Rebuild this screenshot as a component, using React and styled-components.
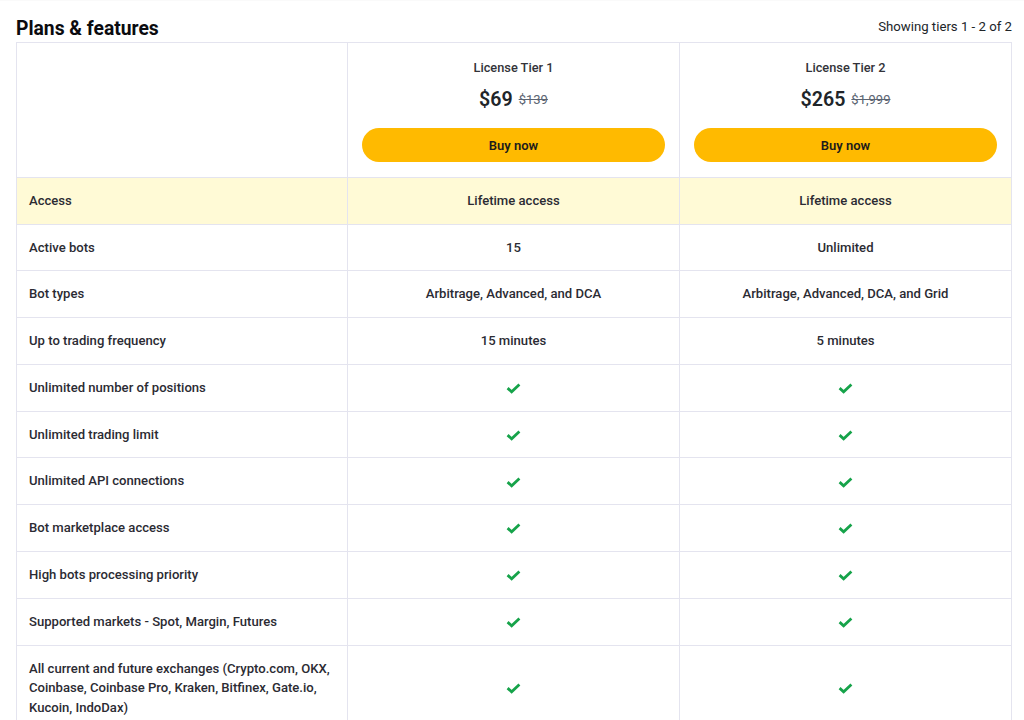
import React from 'react';
import styled, { createGlobalStyle } from 'styled-components';

const Global = createGlobalStyle`
  html, body { margin: 0; padding: 0; background: #fff; overflow: hidden; height: 720px; }
  body { font-family: Roboto, "Liberation Sans", sans-serif; color: #212529; }
`;

const Page = styled.main`
  padding: 16px 12px 0 16px;
  border-top: 1px solid #fafafa;
`;

const Heading = styled.header`
  display: flex;
  justify-content: space-between;
  align-items: flex-end;
  height: 25px;
`;

const Title = styled.h2`
  margin: 0 0 1px;
  font-size: 19.3px;
  line-height: 24px;
  font-weight: 700;
  color: #0b0b0f;
`;

const Showing = styled.span`
  font-size: 13.2px;
  line-height: 20px;
  margin-bottom: 5px;
  color: #212529;
`;

const Table = styled.table`
  width: 996px;
  table-layout: fixed;
  border-collapse: collapse;
  border: 1px solid #e4e4ef;
`;

const Column = styled.col`
  width: ${p => p.$w}px;
`;

const Cell = styled.td`
  border: 1px solid #e4e4ef;
  padding: 13px 12px;
  font-size: 13.1px;
  line-height: 19.77px;
  font-weight: 500;
  color: #2b2b33;
  text-align: ${p => (p.$center ? 'center' : 'left')};
  background: ${p => (p.$hl ? '#fffad6' : 'transparent')};
  vertical-align: middle;
`;

const HeadCell = styled.th`
  border: 1px solid #e4e4ef;
  padding: 15px 14px 14.9px 14px;
  font-weight: 500;
  text-align: center;
  vertical-align: top;
`;

const TierName = styled.div`
  font-size: 12.8px;
  line-height: 20px;
  color: #333339;
`;

const Prices = styled.div`
  display: flex;
  justify-content: center;
  align-items: center;
  gap: 6px;
  margin-top: 7px;
  height: 28px;
`;

const Price = styled.span`
  font-size: 19.6px;
  font-weight: 600;
  color: #212529;
`;

const OldPrice = styled.s`
  font-size: 13px;
  font-weight: 400;
  color: #5b6472;
`;

const Buy = styled.button`
  display: block;
  width: 100%;
  height: 34px;
  margin-top: 15px;
  border: 0;
  border-radius: 17px;
  background: #ffba00;
  color: #1c1c1c;
  font: 600 13px Roboto, sans-serif;
`;

const Check = styled.svg`
  display: block;
  margin: 0 auto;
  width: 15px;
  height: 19.7px;
`;

const Tick = () => (
  <Check viewBox="0 0 15 20" aria-hidden="true">
    <path d="M1.5 10.3 L5.6 14 L13.5 6.6" fill="none" stroke="#16a34a" strokeWidth="2.8" />
  </Check>
);

const textRows = [
  ['Access', 'Lifetime access', 'Lifetime access', true],
  ['Active bots', '15', 'Unlimited'],
  ['Bot types', 'Arbitrage, Advanced, and DCA', 'Arbitrage, Advanced, DCA, and Grid'],
  ['Up to trading frequency', '15 minutes', '5 minutes'],
];

const tickRows = [
  'Unlimited number of positions',
  'Unlimited trading limit',
  'Unlimited API connections',
  'Bot marketplace access',
  'High bots processing priority',
  'Supported markets - Spot, Margin, Futures',
  'All current and future exchanges (Crypto.com, OKX, Coinbase, Coinbase Pro, Kraken, Bitfinex, Gate.io, Kucoin, IndoDax)',
];

const tiers = [
  { name: 'License Tier 1', price: '$69', old: '$139' },
  { name: 'License Tier 2', price: '$265', old: '$1,999' },
];

export default function App() {
  return (
    <Page>
      <Global />
      <Heading>
        <Title>Plans &amp; features</Title>
        <Showing>Showing tiers 1 - 2 of 2</Showing>
      </Heading>
      <Table>
        <colgroup>
          <Column $w={331} />
          <Column $w={332} />
          <Column $w={332} />
        </colgroup>
        <thead>
          <tr>
            <HeadCell />
            {tiers.map(t => (
              <HeadCell key={t.name}>
                <TierName>{t.name}</TierName>
                <Prices>
                  <Price>{t.price}</Price>
                  <OldPrice>{t.old}</OldPrice>
                </Prices>
                <Buy>Buy now</Buy>
              </HeadCell>
            ))}
          </tr>
        </thead>
        <tbody>
          {textRows.map(([label, a, b, hl]) => (
            <tr key={label}>
              <Cell $hl={hl}>{label}</Cell>
              <Cell $hl={hl} $center>{a}</Cell>
              <Cell $hl={hl} $center>{b}</Cell>
            </tr>
          ))}
          {tickRows.map(label => (
            <tr key={label}>
              <Cell>{label}</Cell>
              <Cell $center><Tick /></Cell>
              <Cell $center><Tick /></Cell>
            </tr>
          ))}
        </tbody>
      </Table>
    </Page>
  );
}
